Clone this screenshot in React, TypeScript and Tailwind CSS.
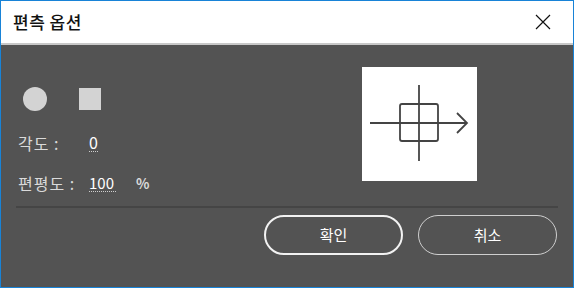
const KR = { fontFamily: '"Noto Sans CJK KR", "Noto Sans", sans-serif' };

function CloseIcon() {
  return (
    <svg width="16" height="16" viewBox="0 0 16 16" fill="none" stroke="#111" strokeWidth="1.2">
      <path d="M1 1 L15 15 M15 1 L1 15" />
    </svg>
  );
}

function Preview() {
  return (
    <div className="h-[114px] w-[115px] bg-white">
      <svg width="115" height="114" viewBox="0 0 115 114" fill="none" stroke="#444" strokeWidth="1.8">
        <path d="M8 56 H105" />
        <path d="M95 46 L105 56 L95 66" />
        <path d="M57 18 V94" />
        <rect x="38" y="37" width="38" height="37" rx="2" />
      </svg>
    </div>
  );
}

export default function App() {
  return (
    <div className="flex h-[288px] w-[574px] flex-col border border-[#1883d7] bg-[#535353]" style={KR}>
      <div className="flex h-[44px] items-center justify-between border-b-2 border-[#c8c8c8] bg-white pl-[12px] pr-[22px]">
        <span className="text-[17px] font-medium tracking-[0.5px] text-[#111]">편측 옵션</span>
        <CloseIcon />
      </div>

      <div className="flex pt-[22px]">
        <div className="flex w-[361px] flex-col pl-[17px] pt-[20px]">
          <div className="flex items-center gap-[32px] pl-[5px]">
            <div className="h-[24px] w-[24px] rounded-full bg-[#d3d3d3]" />
            <div className="h-[22px] w-[22px] bg-[#d3d3d3]" />
          </div>
          <div className="mt-[22px] flex h-[20px] items-center text-[16px] text-[#dadada]">
            <span className="w-[71px] tracking-[1px]">각도 :</span>
            <span className="border-b border-dotted border-[#cfcfcf] leading-[17px] text-white">0</span>
          </div>
          <div className="mt-[20px] flex h-[20px] items-center text-[16px] text-[#dadada]">
            <span className="w-[71px] tracking-[1px]">편평도 :</span>
            <span className="w-[27px] border-b border-dotted border-[#cfcfcf] text-[15px] leading-[17px] text-white">100</span>
            <span className="ml-[20px] text-[14px] font-semibold">%</span>
          </div>
        </div>
        <Preview />
      </div>

      <div className="mx-[15px] mt-[13px] h-[2px] bg-[#454545]" />

      <div className="mt-[7px] flex justify-end gap-[15px] pr-[16px]">
        <button className="h-[40px] w-[139px] rounded-full border-2 border-[#f2f2f2] text-[15px] text-white">
          확인
        </button>
        <button className="h-[40px] w-[139px] rounded-full border border-[#cfcfcf] text-[15px] text-white">
          취소
        </button>
      </div>
    </div>
  );
}
